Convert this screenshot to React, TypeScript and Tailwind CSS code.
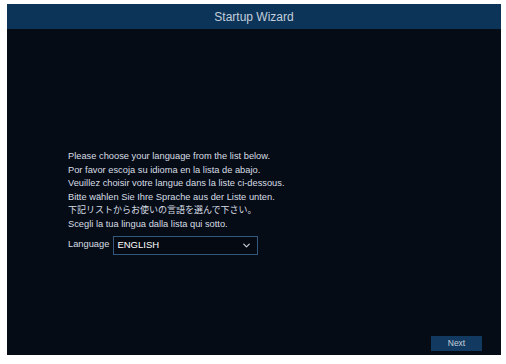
import { ChevronDown } from "lucide-react";

const lines = [
  "Please choose your language from the list below.",
  "Por favor escoja su idioma en la lista de abajo.",
  "Veuillez choisir votre langue dans la liste ci-dessous.",
  "Bitte wählen Sie Ihre Sprache aus der Liste unten.",
  "下記リストからお使いの言語を選んで下さい。",
  "Scegli la tua lingua dalla lista qui sotto.",
];

export default function App() {
  return (
    <div
      className="w-[506px] h-[364px] bg-white pl-[7px] pr-[5px] pt-[4px] pb-[9px]"
      style={{ fontFamily: '"Liberation Sans", Arial, "Noto Sans CJK JP", sans-serif' }}
    >
      <div className="flex h-full flex-col bg-[#060c16]">
        <header className="flex h-[25px] shrink-0 items-center justify-center bg-[#0c3458] text-[12px] text-[#c3cfdc]">
          Startup Wizard
        </header>

        <main className="flex flex-1 flex-col pl-[61px] pt-[121px]">
          <div className="flex flex-col text-[9.3px] leading-[13.6px] text-[#d7dde4]">
            {lines.map((l, i) => (
              <p key={l} className={i === 4 ? "text-[9px]" : ""}>
                {l}
              </p>
            ))}
          </div>

          <div className="mt-[4px] flex items-center gap-[4px] text-[9.3px] text-[#d7dde4]">
            <span>Language</span>
            <div className="flex h-[19px] w-[145px] items-center justify-between border border-[#34577e] bg-[#050a12] pl-[3px] pr-[5px] text-white">
              <span className="text-[9.5px]">ENGLISH</span>
              <ChevronDown size={11} strokeWidth={2.5} className="text-[#c9d2dc]" />
            </div>
          </div>
        </main>

        <footer className="flex justify-end pb-[4px] pr-[19px]">
          <button className="h-[15px] w-[51px] bg-[#123a60] text-[8.5px] text-[#c3cfdc]">
            Next
          </button>
        </footer>
      </div>
    </div>
  );
}
